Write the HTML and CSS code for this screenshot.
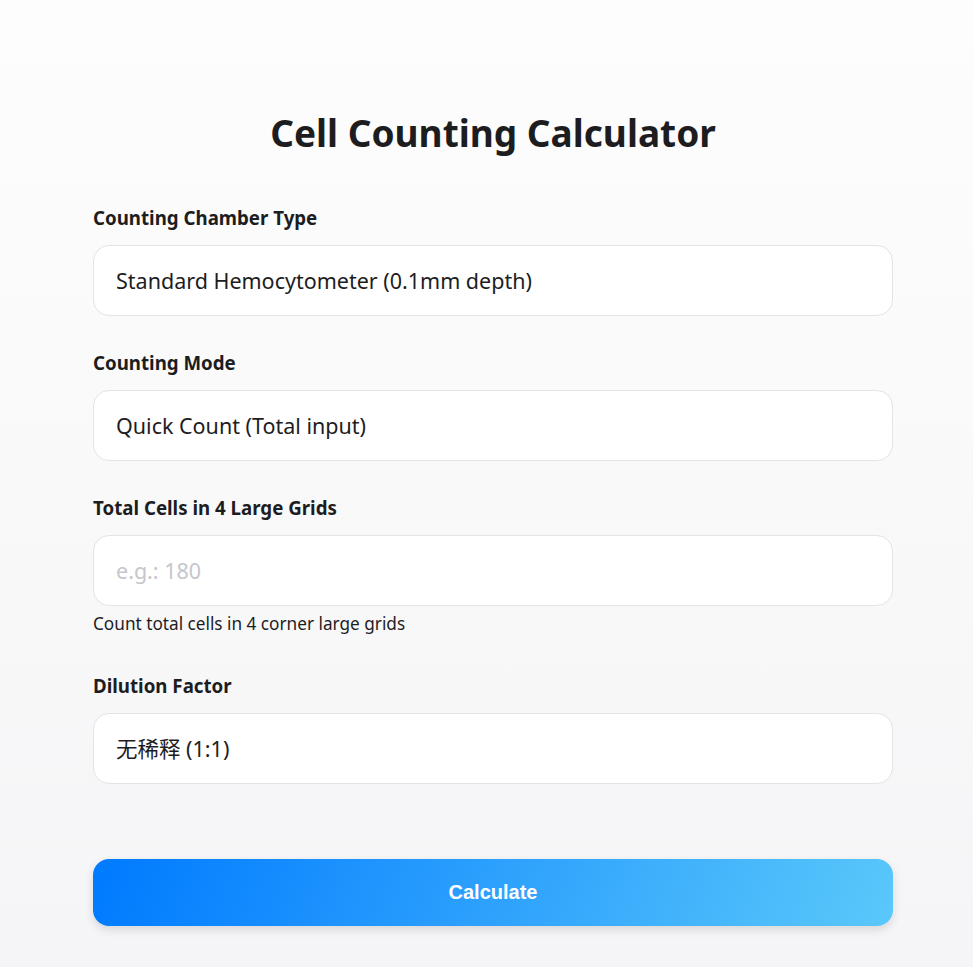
FILE: index.html
```html
<!DOCTYPE html>
<html lang="en">
  <head>
    <meta charset="UTF-8" />
    <meta name="viewport" content="width=device-width, initial-scale=1.0" />
    <title>Cell Counting Calculator</title>
    <link rel="stylesheet" href="styles.css">
  </head>

  <body>
    <main class="calculator">
      <h1>Cell Counting Calculator</h1>

      <div class="field">
        <label for="chamber">Counting Chamber Type</label>
        <select id="chamber">
          <option>Standard Hemocytometer (0.1mm depth)</option>
        </select>
      </div>

      <div class="field">
        <label for="mode">Counting Mode</label>
        <select id="mode">
          <option>Quick Count (Total input)</option>
        </select>
      </div>

      <div class="field">
        <label for="total">Total Cells in 4 Large Grids</label>
        <input id="total" type="number" placeholder="e.g.: 180" />
        <p class="hint">Count total cells in 4 corner large grids</p>
      </div>

      <div class="field">
        <label for="dilution">Dilution Factor</label>
        <select id="dilution">
          <option>无稀释 (1:1)</option>
        </select>
      </div>

      <button class="calc-btn">Calculate</button>
    </main>
  </body>
</html>
```

FILE: styles.css
```css
* {
  box-sizing: border-box;
  margin: 0;
  padding: 0;
}

:root {
  --radius: 16px;
  --border-color: #e3e3e8;
  --text: #1d1d1f;
}

body {
  font-family: "Noto Sans", "Noto Sans CJK SC", sans-serif;
  color: var(--text);
  background: linear-gradient(to bottom, #fdfdfd, #f5f5f7);
  min-height: 967px;
  padding: 0 0 0 13px;
}

.calculator {
  width: 800px;
  margin: 0 auto;
  padding-top: 108px;
}

h1 {
  text-align: center;
  font-size: 37px;
  font-weight: 700;
  line-height: 50px;
  margin-bottom: 47px;
}

.field {
  display: flex;
  flex-direction: column;
  margin-bottom: 34px;
}

.field label {
  font-size: 18.7px;
  font-weight: 700;
  line-height: 26px;
  margin-bottom: 14px;
}

.field select,
.field input {
  appearance: none;
  -webkit-appearance: none;
  width: 100%;
  height: 71px;
  padding: 0 22px;
  border: 1px solid var(--border-color);
  border-radius: var(--radius);
  background: #fff;
  font-family: "Noto Sans", "Noto Sans CJK SC", sans-serif;
  font-size: 21.5px;
  color: var(--text);
  outline: none;
}

.field input::placeholder {
  color: #c6c6cb;
}

/* hide number spinner */
.field input::-webkit-outer-spin-button,
.field input::-webkit-inner-spin-button {
  -webkit-appearance: none;
}

.hint {
  font-size: 17.2px;
  line-height: 22px;
  margin-top: 7px;
  margin-bottom: 4px;
}

/* margin collapses with the last field's margin-bottom */
.calc-btn {
  display: block;
  width: 100%;
  height: 67px;
  margin-top: 75px;
  border: none;
  border-radius: var(--radius);
  background: linear-gradient(110deg, #007aff, #5ac8fa);
  box-shadow: 0 4px 10px rgba(0, 0, 0, 0.12);
  color: #fff;
  font-family: "Liberation Sans", Arial, sans-serif;
  font-size: 20px;
  font-weight: 700;
  cursor: pointer;
}
```
